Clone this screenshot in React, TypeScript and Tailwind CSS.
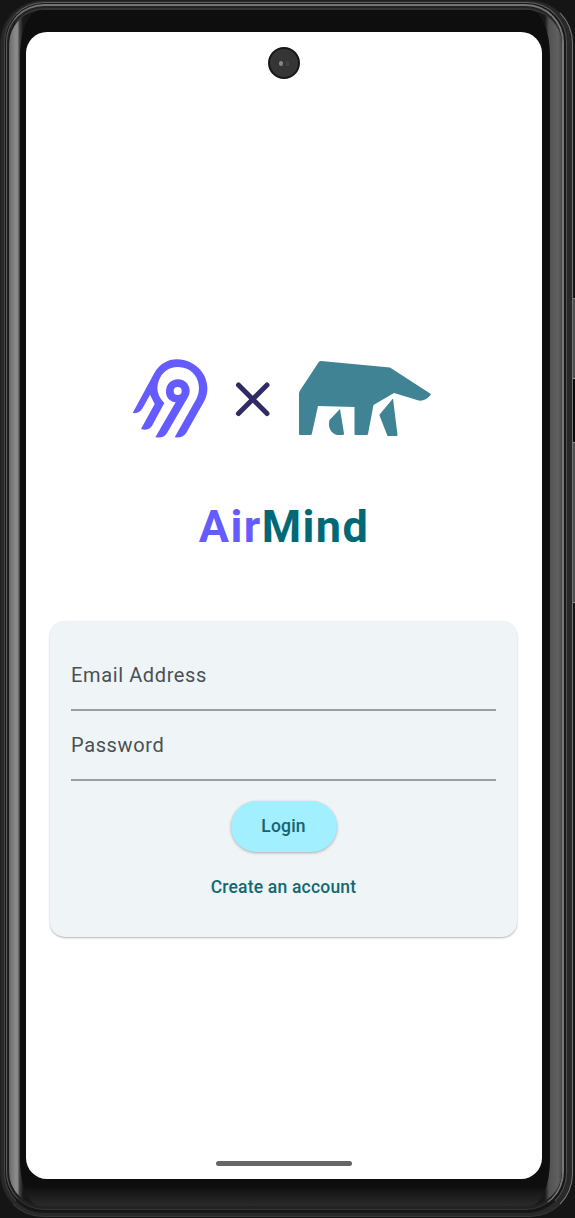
import type { ReactNode } from "react";

function AirbyteLogo() {
  return (
    <svg className="h-[82px] w-[78px]" viewBox="38 36 234 246" fill="#645cff" aria-label="Airbyte">
      <path
        fillRule="evenodd"
        d="M40 204 L105 84 C126 48 160 36 196 46 C252 61 280 119 255 168 L201 263 C194 274 184 279 166 277 L231 162 C251 121 231 76 192 68 C158 60 129 76 118 108 C109 134 117 155 135 174 L99 241 C92 253 82 257 65 252 L106 177 L92 149 L70 189 C63 201 55 206 40 204Z"
      />
      <path
        fillRule="evenodd"
        d="M175 103 C199 103 212 121 211 140 C210 148 207 155 203 161 L143 264 C136 276 127 279 108 277 L169 172 C150 170 139 156 140 138 C141 118 155 103 175 103Z M175 126 A12 12 0 1 0 175 150 A12 12 0 1 0 175 126Z"
      />
    </svg>
  );
}

function BearLogo() {
  return (
    <svg className="h-[76px] w-[134px]" viewBox="0 0 134 76" fill="#408394" aria-label="Bear">
      <path d="M23 1 L92 7.5 L132.5 33.8 Q133 34.5 132.4 35.3 Q126 42.5 119 40 L96 33 L75.5 45 L70 74 Q69.7 75 68.7 75 H57.5 Q56.5 75 56.5 74 V47 L20 46 L13.8 74 Q13.5 75 12.5 75 H2 Q1 75 1 74 V34 Q1 32 2 30.5 L20.8 2 Q21.6 1 23 1Z" />
      <path d="M42 49 L46 73.5 Q46 75 44.5 75 H39 C33 73.5 29.5 67 31.5 60 Z" />
      <path d="M95 38.5 L99.5 75 Q99.4 76 98.5 76 H89.5 L81.5 55.5 Q81.4 54.5 82 54 Z" />
    </svg>
  );
}

function Field({ label, type }: { label: string; type: string }) {
  return (
    <label className="relative block h-[70px] border-b-2 border-[#999fa2] pt-[20px]">
      <span className="block text-[20px] leading-[28px] tracking-[0.62px] text-[#4a5053]">{label}</span>
      <input type={type} aria-label={label} className="absolute inset-0 w-full bg-transparent opacity-0" />
    </label>
  );
}

function Device({ children }: { children: ReactNode }) {
  return (
    <div className="h-[1217px] w-[573px] shrink-0 rounded-[43px] border border-l-[#202020] border-r-[#777777] border-t-[#202020] border-b-[#383838] bg-[#292929]">
      <div className="h-full rounded-[42px] pt-px pr-[5px] pb-[3px] pl-[3px]">
        <div className="h-full rounded-[40px] border border-l-[#444444] border-r-[#505050] border-t-[#626262] border-b-[#191919] bg-[#161616] pt-px pr-[2px] pb-[2px] pl-px">
          <div className="h-full rounded-[38px] border border-t-2 border-r-2 border-l-[#5b5b5b] border-r-[#777777] border-t-[#747474] border-b-[#353535] bg-[#232323] pt-[2px] pb-px pl-px">
            <div className="h-full rounded-[36px] border-t-2 border-l border-b-2 border-t-[#343434] border-l-[#1a1a1a] border-b-[#222222] bg-[linear-gradient(90deg,#606060_0px,#747474_2px,#8c8c8c_7px,#858585_9px,#4b4b4b_10px,#181818_14px,#181818_536px,#525252_540px,#606060_549px,#484848_553px)] pr-[12px] pl-[11px]">
              <div className="h-full rounded-[20px/46px] bg-[linear-gradient(180deg,#0e0e0e_0px,#0e0e0e_1176px,#2b2b2b_1196px)] pt-[22px] pr-[7px] pl-[6px]">
                {children}
              </div>
            </div>
          </div>
        </div>
      </div>
    </div>
  );
}

function SideButtons() {
  return (
    <div className="flex h-[1218px] w-[2px] flex-col pt-[298px]">
      <div className="h-[81px] border-y border-t-[#777777] border-b-[#999999] bg-[#505050]" />
      <div className="h-[63px] bg-[#0c0c0c]" />
      <div className="h-[161px] border-y border-t-[#888888] border-b-[#888888] bg-[#505050]" />
    </div>
  );
}

export default function App() {
  return (
    <div className="flex h-[1218px] w-[575px] overflow-hidden bg-[#151515] font-['Roboto',sans-serif]">
      <Device>
        <main className="flex h-[1147px] w-[516px] flex-col items-center rounded-[21px] bg-white">
          <div className="mt-[15px] flex h-[32px] w-[32px] items-center justify-center gap-[3px] rounded-full border-2 border-[#171717] bg-[#353535]">
            <span className="h-[5px] w-[4px] rounded-full bg-[#858585]" />
            <span className="h-[5px] w-[3px] rounded-full bg-[#444444]" />
          </div>
          <div className="mt-[278px] mr-[2px] flex h-[82px] w-[302px] items-center">
            <AirbyteLogo />
            <svg className="mt-[2px] ml-[25px] h-[36px] w-[36px]" viewBox="0 0 36 36" stroke="#302b65" strokeWidth="5" strokeLinecap="round">
              <path d="M3.5 4 L32 32.5 M32 4 L3.5 32.5" />
            </svg>
            <span className="ml-[27px]"><BearLogo /></span>
          </div>
          <h1 className="mt-[61px] h-[54px] text-[45px] leading-[54px] font-bold tracking-[1.4px] text-[#006876]">
            <span className="text-[#645cff]">Air</span>Mind
          </h1>
          <form className="mt-[67px] mr-px flex h-[316px] w-[467px] flex-col rounded-[15px] bg-[#eff4f7] px-[21px] pt-[20px] shadow-[0_1px_2px_rgba(0,0,0,0.3)]">
            <Field label="Email Address" type="email" />
            <Field label="Password" type="password" />
            <button type="button" className="mt-[20px] h-[51px] w-[106px] self-center rounded-full bg-[#a1efff] text-[17.5px] font-medium tracking-[0.2px] text-[#176370] shadow-[0_1px_3px_rgba(0,0,0,0.3)]">
              Login
            </button>
            <button type="button" className="mt-[22px] h-[26px] self-center text-[17.5px] leading-[26px] font-medium tracking-[0.2px] whitespace-nowrap text-[#126873]">
              Create an account
            </button>
          </form>
          <div className="mt-auto mb-[13px] h-[5px] w-[136px] rounded-full bg-[#666666]" />
        </main>
      </Device>
      <SideButtons />
    </div>
  );
}
